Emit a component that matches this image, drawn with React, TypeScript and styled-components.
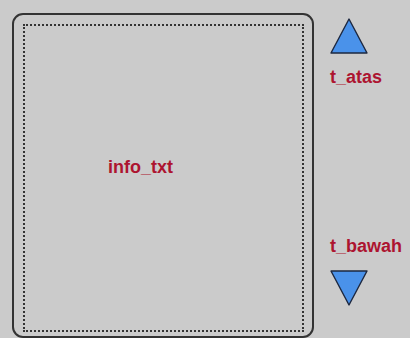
import styled, { createGlobalStyle } from 'styled-components';

const GlobalStyle = createGlobalStyle`
  html, body {
    margin: 0;
    padding: 0;
    background: #cbcbcb;
    font-family: "Liberation Sans", Arial, sans-serif;
  }
`;

function Arrow({ down }: { down?: boolean }) {
    const pts = down ? '1,1 37,1 19,35' : '1,35 19,1 37,35';
    return (
        <svg width="38" height="36" viewBox="0 0 38 36">
            <polygon points={pts} fill="#4a92ea" stroke="#1d2840" strokeWidth="1.4" strokeLinejoin="round" />
        </svg>
    );
}

export default function App() {
    return (
        <Page>
            <GlobalStyle />
            <InfoBox>
                <Dotted>
                    <Label>info_txt</Label>
                </Dotted>
            </InfoBox>
            <Side>
                <Group>
                    <Arrow />
                    <Label>t_atas</Label>
                </Group>
                <Group>
                    <Label>t_bawah</Label>
                    <Arrow down />
                </Group>
            </Side>
        </Page>
    );
}

const Page = styled.div`
    display: flex;
    align-items: flex-start;
    padding: 13px 0 0 12px;
    width: 410px;
    height: 338px;
    box-sizing: border-box;
    overflow: hidden;
`;

const InfoBox = styled.div`
    width: 302px;
    height: 325px;
    box-sizing: border-box;
    border: 2px solid #333;
    border-radius: 11px;
    padding: 9px 8px 4px 9px;
    display: flex;
`;

const Dotted = styled.div`
    flex: 1;
    border: 2px dotted #333;
    padding: 131px 0 0 83px;
`;

const Label = styled.div`
    color: #ad1430;
    font-size: 18px;
    font-weight: bold;
    line-height: 21px;
    white-space: nowrap;
`;

const Side = styled.div`
    margin-left: 16px;
    margin-top: 5px;
    height: 288px;
    display: flex;
    flex-direction: column;
    justify-content: space-between;
`;

const Group = styled.div`
    display: flex;
    flex-direction: column;
    gap: 13px;
    svg {
        display: block;
    }
`;
